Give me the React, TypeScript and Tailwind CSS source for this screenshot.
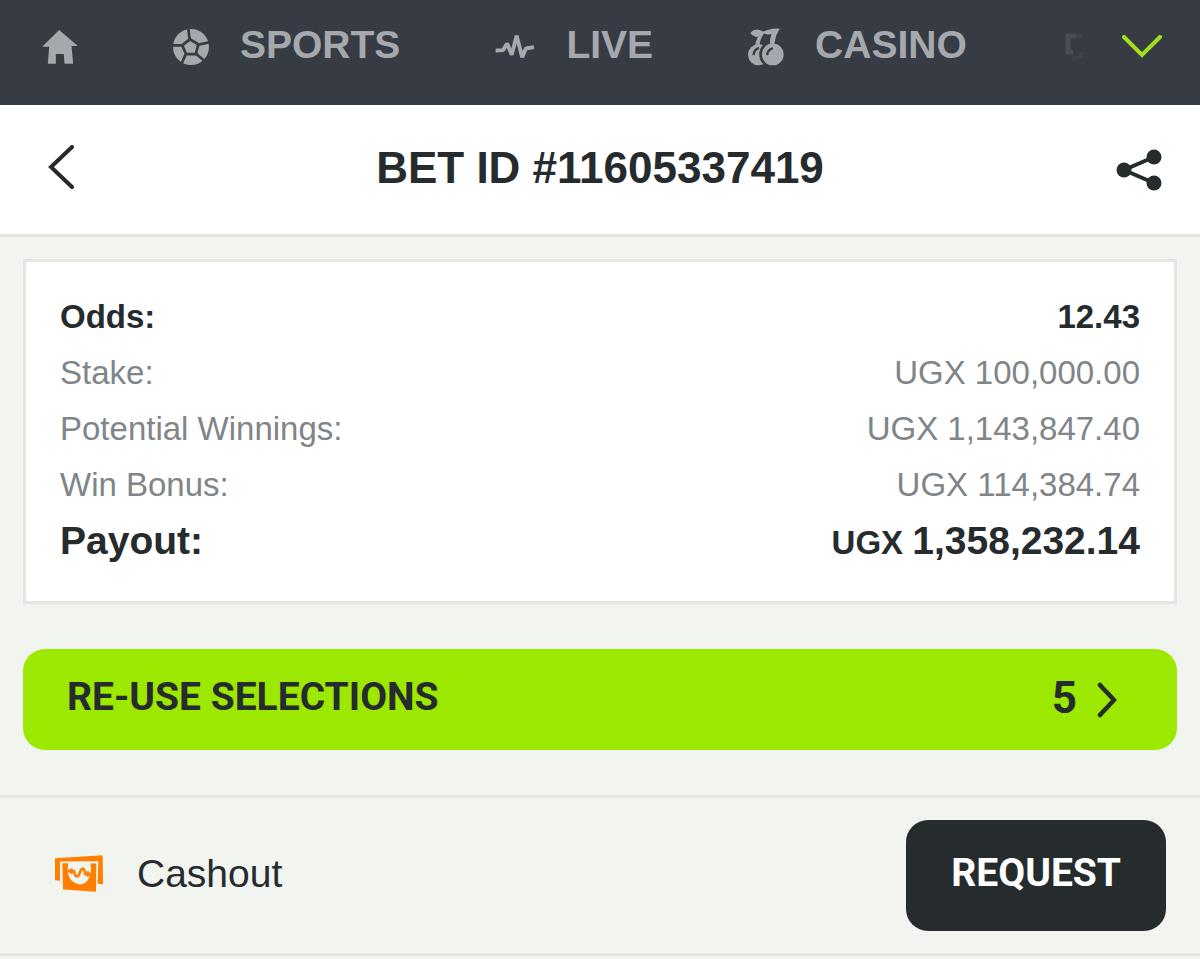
import React from 'react';

const navLinkClass = 'flex shrink-0 items-center gap-[31px] text-[39px] leading-[52px] font-bold text-[#a5a9ae]';

const HomeIcon: React.FC = () => (
  <svg className="h-[34px] w-9" viewBox="66 57 107 102" fill="#a5a9ae" aria-hidden="true">
    <path d="M117 57 173 105H154L159 158H133L131 129H107V158H83L87 107H66Z" />
  </svg>
);

const BallIcon: React.FC = () => (
  <svg className="size-9" viewBox="455 57 106 106" aria-hidden="true">
    <circle cx="508" cy="110" r="53" fill="#a5a9ae" />
    <path
      d="M500 55 504 88M564 96 530 103M549 152 523 130M480 160 493 130M452 105H484"
      stroke="#373b43"
      strokeWidth="8"
    />
    <path
      d="M505 92 525 104 519 127 496 127 487 106Z"
      fill="#a5a9ae"
      stroke="#373b43"
      strokeWidth="16"
      paintOrder="stroke"
    />
  </svg>
);

const LiveIcon: React.FC = () => (
  <svg className="h-[27px] w-10" viewBox="42 68 122 82" fill="none" aria-hidden="true">
    <path
      d="M44 121 67 120 79 100 93 134 108 76 125 142 136 115 161 111"
      stroke="#a5a9ae"
      strokeWidth="12"
      strokeLinejoin="bevel"
    />
  </svg>
);

const CherryIcon: React.FC = () => (
  <svg className="h-[38px] w-9" viewBox="801 53 109 113" aria-hidden="true">
    <path d="M808 67Q818 55 832 57Q841 58 848 64Q836 80 824 79Q814 76 808 67Z" fill="#a5a9ae" />
    <path d="M860 58Q877 53 897 54L884 79 880 103 867 102Q867 84 873 71L860 72 850 69Q838 83 836 104L823 104Q826 82 841 65Z" fill="#a5a9ae" />
    <circle cx="833" cy="133" r="32" fill="#a5a9ae" />
    <path d="M818 134Q819 117 834 112" stroke="#373b43" strokeWidth="7" fill="none" />
    <circle cx="876" cy="132" r="37" fill="#a5a9ae" stroke="#373b43" strokeWidth="8" />
    <path d="M867 104Q867 84 873 71L886 74 880 104Z" fill="#a5a9ae" />
    <path d="M859 134Q860 118 876 113" stroke="#373b43" strokeWidth="7" fill="none" />
  </svg>
);

const CashoutIcon: React.FC = () => (
  <svg className="h-[37px] w-12" viewBox="75 44 144 110" aria-hidden="true">
    <path d="M75 53 218 44 219 131 203 130 205 62 90 63V121L75 119Z" fill="#ff8000" />
    <path d="M97 68 199 69 198 154 99 147Z" fill="#ff8000" />
    <path d="M116 66H181Q185 84 182 100Q174 131 150 132Q122 129 114 100Q111 82 116 66Z" fill="#f2f5ef" />
    <path
      d="M112 92H132C134 108 141 111 147 103L152 90C158 80 164 84 166 101H188M124 84V100M174 92V109"
      stroke="#ff8000"
      strokeWidth="8"
      fill="none"
    />
  </svg>
);

const details = [
  { label: 'Stake:', value: 'UGX 100,000.00' },
  { label: 'Potential Winnings:', value: 'UGX 1,143,847.40' },
  { label: 'Win Bonus:', value: 'UGX 114,384.74' },
];

const App: React.FC = () => {
  return (
    <div className="min-h-screen bg-[#f2f5ef] font-['Liberation_Sans',Arial,sans-serif] text-[#262b2e]">
      {/* Main navigation */}
      <nav className="flex h-[105px] items-center bg-[#373b43] pr-[38px] pb-3 pl-[42px]">
        <div className="flex min-w-0 flex-1 items-center gap-[95px] overflow-hidden">
          <a href="#home" aria-label="Home" className={navLinkClass}>
            <HomeIcon />
          </a>
          <a href="#sports" className={navLinkClass}>
            <BallIcon />
            <span className="pb-1">SPORTS</span>
          </a>
          <a href="#live" className={navLinkClass}>
            <LiveIcon />
            <span className="pb-1">LIVE</span>
          </a>
          <a href="#casino" className={navLinkClass}>
            <CherryIcon />
            <span className="pb-1">CASINO</span>
          </a>
          {/* Next item, faded out at the edge of the scroller */}
          <a href="#virtuals" aria-label="More" className="shrink-0">
            <svg className="h-7 w-6" viewBox="0 0 24 28" fill="none" aria-hidden="true">
              <path d="M14 3H6V19H11" stroke="#4a4d55" strokeWidth="5" />
              <path d="M14 3H21M19 19V23L11 26" stroke="#3f434b" strokeWidth="4" />
            </svg>
          </a>
        </div>
        <button type="button" aria-label="Show all" className="ml-6 shrink-0">
          <svg className="h-6 w-10" viewBox="0 0 40 24" fill="none" aria-hidden="true">
            <path d="M2 2 20 20 38 2" stroke="#a3e01c" strokeWidth="4" strokeLinecap="round" />
          </svg>
        </button>
      </nav>

      {/* Bet header */}
      <header className="flex h-[132px] items-center justify-between border-b-3 border-[#e2e4e0] bg-white pr-[38px] pb-1 pl-[47px]">
        <button type="button" aria-label="Back" className="w-[37px]">
          <svg className="h-[46px] w-7" viewBox="0 0 28 46" fill="none" aria-hidden="true">
            <path d="M25 2 4 22 25 42" stroke="#262b2e" strokeWidth="4" strokeLinecap="round" />
          </svg>
        </button>
        <h1 className="text-[44px] leading-none font-bold">BET ID #11605337419</h1>
        <button type="button" aria-label="Share" className="w-[46px] pt-1">
          <svg className="h-[42px] w-[46px]" viewBox="0 0 46 42" aria-hidden="true">
            <path d="M38 8 8 21 38 34" fill="none" stroke="#262b2e" strokeWidth="4" />
            <g fill="#262b2e">
              <circle cx="38" cy="8" r="7.5" />
              <circle cx="8" cy="21" r="7.5" />
              <circle cx="38" cy="34" r="7.5" />
            </g>
          </svg>
        </button>
      </header>

      <main>
        {/* Bet summary */}
        <section className="px-[23px] pt-[22px] pb-[45px]">
          <dl className="border-3 border-[#e4e6e2] bg-white px-[34px] pt-[27px] pb-[30px] text-[33px] leading-[56px]">
            <div className="flex justify-between font-bold">
              <dt>Odds:</dt>
              <dd>12.43</dd>
            </div>
            {details.map((row) => (
              <div key={row.label} className="flex justify-between text-[#7f8588]">
                <dt>{row.label}</dt>
                <dd>{row.value}</dd>
              </div>
            ))}
            <div className="flex items-baseline justify-between font-bold">
              <dt className="text-[39px]">Payout:</dt>
              <dd>
                UGX <span className="text-[39px]">1,358,232.14</span>
              </dd>
            </div>
          </dl>

          <button
            type="button"
            className="mt-[45px] flex h-[101px] w-full items-center justify-between rounded-[22px] bg-[#9ce800] pr-[60px] pb-1 pl-[44px] font-[Roboto,sans-serif] text-[39px] leading-none font-bold"
          >
            RE-USE SELECTIONS
            <span className="flex items-center gap-5 text-[44px]">
              5
              <svg className="mt-1 h-9 w-5" viewBox="0 0 20 36" fill="none" aria-hidden="true">
                <path d="M3 3 17 18 3 33" stroke="#262b2e" strokeWidth="4.5" strokeLinecap="round" />
              </svg>
            </span>
          </button>
        </section>

        {/* Cashout */}
        <section className="flex items-center justify-between border-y-3 border-[#e4e6e2] py-[22px] pr-[34px] pl-[55px]">
          <div className="flex items-center gap-[34px] pb-1 text-[39px] leading-none">
            <CashoutIcon />
            Cashout
          </div>
          <button
            type="button"
            className="h-[111px] rounded-[22px] bg-[#262b2e] px-[45px] pb-1 font-[Roboto,sans-serif] text-[39px] leading-none font-bold text-white"
          >
            REQUEST
          </button>
        </section>
      </main>
    </div>
  );
};

export default App;
